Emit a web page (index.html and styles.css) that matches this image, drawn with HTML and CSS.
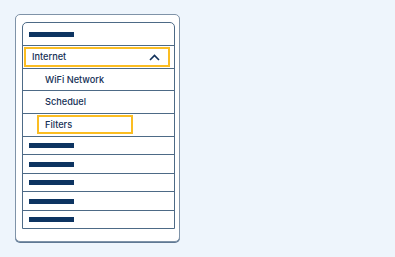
FILE: index.html
```html
<!DOCTYPE html>
<html>
<head>
<meta charset="utf-8">
<link rel="stylesheet" href="styles.css">
</head>
<body>
  <div class="card">
    <div class="list">
      <div class="row row-top"><span class="bar"></span></div>
      <div class="row row-item">
        <div class="hl hl-parent">
          <span class="label">Internet</span>
          <svg class="chev" width="11" height="7" viewBox="0 0 11 7"><path d="M1 6 L5.5 1.5 L10 6" fill="none" stroke="#10305a" stroke-width="1.6"/></svg>
        </div>
      </div>
      <div class="row row-sub"><span class="label">WiFi Network</span></div>
      <div class="row row-sub"><span class="label">Scheduel</span></div>
      <div class="row row-item row-filters">
        <div class="hl hl-child"><span class="label">Filters</span></div>
      </div>
      <div class="row row-bar"><span class="bar"></span></div>
      <div class="row row-bar tall"><span class="bar"></span></div>
      <div class="row row-bar"><span class="bar"></span></div>
      <div class="row row-bar tall"><span class="bar"></span></div>
      <div class="row row-bar last"><span class="bar"></span></div>
    </div>
  </div>
</body>
</html>
```

FILE: styles.css
```css
html, body {
  margin: 0;
  padding: 0;
  background: #eef5fc;
  font-family: "Inter", "Liberation Sans", sans-serif;
}
body {
  width: 395px;
  height: 257px;
  overflow: hidden;
}
.card {
  box-sizing: border-box;
  margin: 14px 0 0 15px;
  width: 165px;
  height: 228px;
  background: #ffffff;
  border: 1px solid #7f93a8;
  border-radius: 5px;
  box-shadow: 0 1px 0 #5f7893;
  padding: 7px 4px 0 6px;
}
.list {
  border: 1px solid #4d6a86;
  border-radius: 5px 5px 0 0;
  display: flex;
  flex-direction: column;
}
.row {
  display: flex;
  align-items: center;
  border-bottom: 1px solid #4d6a86;
}
.row:last-child { border-bottom: none; }
.row-top {
  height: 22px;
  padding-left: 6px;
}
.bar {
  display: block;
  width: 45px;
  height: 5px;
  background: #0d3461;
}
.row-item {
  height: 22px;
}
.hl {
  box-sizing: border-box;
  border: 2px solid #fbbd22;
  height: 20px;
  display: flex;
  align-items: center;
}
.hl-parent {
  margin-left: 1px;
  width: 146px;
  padding: 0 8px 0 6px;
  justify-content: space-between;
}
.hl-child {
  margin-left: 14px;
  width: 96px;
  height: 19px;
  padding-left: 6px;
}
.row-filters {
  align-items: flex-start;
  padding-top: 1px;
  height: 21px;
}
.row-sub {
  height: 21px;
  padding-left: 22px;
}
.row-sub + .row-sub { height: 22px; }
.label {
  font-size: 9.2px;
  font-weight: 500;
  color: #142f55;
  line-height: 12px;
}
.row-bar {
  height: 17px;
  padding-left: 6px;
}
.row-bar.tall { height: 18px; }
.chev { display: block; }
```
